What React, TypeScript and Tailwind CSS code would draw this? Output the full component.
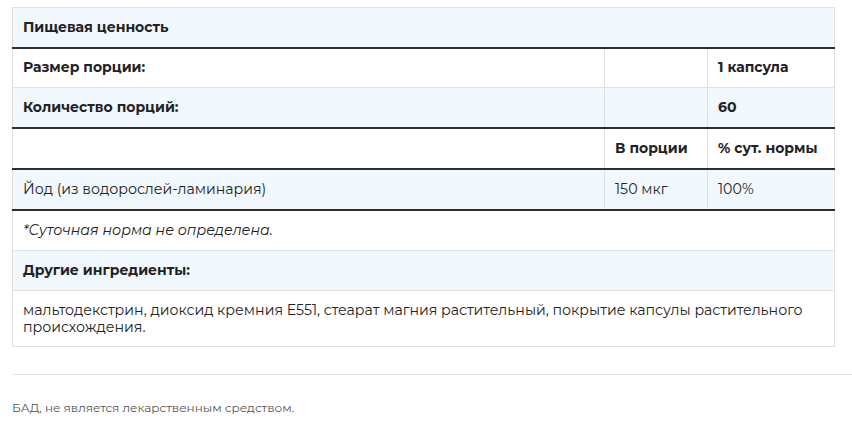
const rows = [
  { a: "Размер порции:", b: "", c: "1 капсула", bold: true, bg: false, thick: false, h: "h-[40px]" },
  { a: "Количество порций:", b: "", c: "60", bold: true, bg: true, thick: true, h: "h-[40px]" },
  { a: "", b: "В порции", c: "% сут. нормы", bold: true, bg: false, thick: true, h: "h-[41px]" },
  { a: "Йод (из водорослей-ламинария)", b: "150 мкг", c: "100%", bold: false, bg: true, thick: true, h: "h-[41px]" },
];

export default function App() {
  return (
    <div className="w-[852px] h-[426px] bg-white pl-3 pt-[7px] font-['Montserrat','DejaVu_Sans',sans-serif] text-[#222]">
      <table className="w-[823px] border-collapse text-[14.2px] leading-[17px]">
        <tbody>
          <tr className="bg-[#f1f8fe]">
            <td colSpan={3} className="h-[40px] border border-[#e1e1e1] border-b-2 border-b-[#2e2e2e] px-[10px] text-[14px] font-bold">
              Пищевая ценность
            </td>
          </tr>
          {rows.map((r) => (
            <tr key={r.a + r.c} className={r.bg ? "bg-[#f1f8fe]" : "bg-white"}>
              {[r.a, r.b, r.c].map((t, i) => (
                <td
                  key={i}
                  className={`${r.h} border border-[#e1e1e1] px-[10px] ${r.thick ? "border-b-2 border-b-[#2e2e2e]" : ""} ${r.bold ? "text-[14px] font-bold" : ""} ${i === 0 ? "w-[592px]" : i === 1 ? "w-[103px]" : ""}`}
                >
                  {t}
                </td>
              ))}
            </tr>
          ))}
          <tr>
            <td colSpan={3} className="h-[41px] border border-[#e1e1e1] px-[10px] italic">
              *Суточная норма не определена.
            </td>
          </tr>
          <tr className="bg-[#f1f8fe]">
            <td colSpan={3} className="h-[40px] border border-[#e1e1e1] px-[10px] text-[14px] font-bold">
              Другие ингредиенты:
            </td>
          </tr>
          <tr>
            <td colSpan={3} className="h-[56px] border border-[#e1e1e1] px-[10px] py-[10px]">
              мальтодекстрин, диоксид кремния Е551, стеарат магния растительный, покрытие капсулы растительного происхождения.
            </td>
          </tr>
        </tbody>
      </table>
      <div className="mt-[27px] h-px bg-[#e5e5e5]" />
      <p className="mt-[24px] text-[12px] text-[#555]">БАД, не является лекарственным средством.</p>
    </div>
  );
}
